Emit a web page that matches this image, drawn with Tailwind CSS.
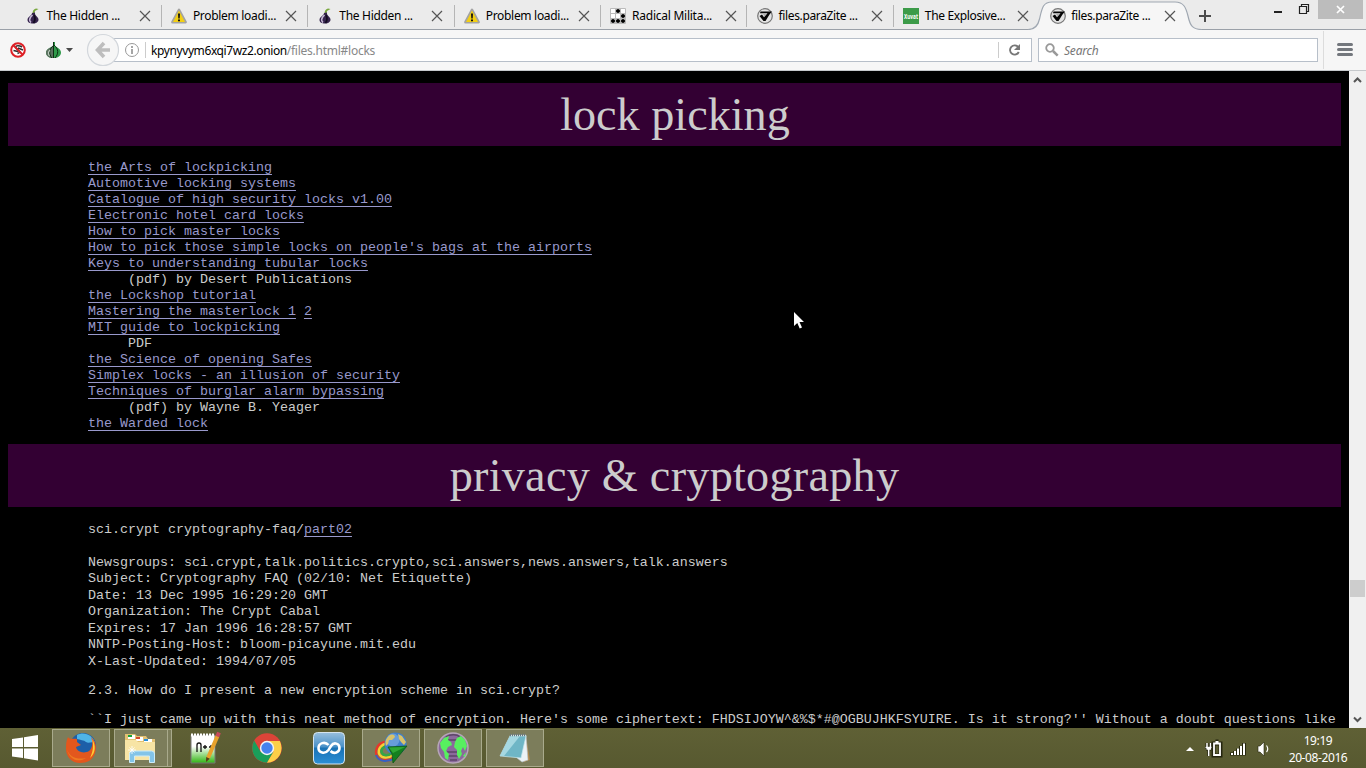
<!DOCTYPE html>
<html lang="en">
<head>
<meta charset="utf-8">
<title>files.paraZite</title>
<script src="https://cdn.jsdelivr.net/npm/@tailwindcss/browser@4"></script>
</head>
<body class="w-[1366px] h-[768px] overflow-hidden bg-black flex flex-col font-['Noto_Sans',sans-serif] text-[12px] text-black">
<svg class="hidden">
  <symbol id="close" viewBox="0 0 12 12"><path d="M1 1L11 11M11 1L1 11" stroke="#555" stroke-width="1.2" fill="none"/></symbol>
  <symbol id="onion" viewBox="0 0 16 16"><path d="M7.500 6C7.500 3 8.500 1 11 .5L13.500 1L10 3L9.500 6Z" fill="#79a83e"/><path d="M7 5C7 8 2.500 8.500 2.500 12C2.500 14.500 5 15.500 8 15.500S13.500 14 13.500 11.500C13.500 8.500 9.500 8 10 4.500Z" fill="#35234c"/><path d="M7.500 7C4 10 4 13 6 14.500" stroke="#c6bad6" stroke-width="1.600" fill="none"/><path d="M9 7C10.500 10 10 13 8.500 15" stroke="#120b20" stroke-width="1.800" fill="none"/></symbol>
  <symbol id="warn" viewBox="0 0 16 16"><path d="M8 1.800L14.600 14.200H1.400Z" fill="#e8c51b" stroke="#a3a3a3" stroke-width="2.500" stroke-linejoin="round"/><path d="M8 2.500L14 14H2Z" fill="#f3cf14"/><path d="M7 5.500H9L8.700 10.500H7.300ZM7 11.500H9V13.300H7Z" fill="#111"/></symbol>
  <symbol id="glider" viewBox="0 0 16 16"><path d="M.5 .5H15.500V15.500H.5ZM5.500 .5V15.500M10.500 .5V15.500M.5 5.500H15.500M.5 10.500H15.500" fill="#fff" stroke="#bbb"/><g fill="#000"><circle cx="8" cy="3" r="2.100"/><circle cx="13" cy="8" r="2.100"/><circle cx="3" cy="13" r="2.100"/><circle cx="8" cy="13" r="2.100"/><circle cx="13" cy="13" r="2.100"/></g></symbol>
  <symbol id="check" viewBox="0 0 16 16"><circle cx="8" cy="8" r="7.300" fill="#e4e4e4" stroke="#777" stroke-width="1.200"/><path d="M3.500 3.500H15L12.500 6.500L8.500 13H6.500L2.500 8L5 6.500L7 9.200L10.500 5.300H3Z" fill="#050505"/><path d="M6 5.800H9.500L7.200 8.300Z" fill="#aaa"/></symbol>
</svg>

<header class="h-[30px] shrink-0 bg-[#ebebeb] border-b border-[#9aa0a8] flex pl-[15.500px] relative">
  <div class="w-[146.400px] shrink-0 h-[29px] pl-[9px] flex items-center relative pt-[3px]"><svg class="size-4 shrink-0"><use href="#onion"/></svg><span class="ml-[6px] w-[87px] whitespace-nowrap tracking-[-0.300px]">The Hidden ...</span><svg class="size-3 ml-[5px] shrink-0"><use href="#close"/></svg><i class="absolute right-0 top-[5px] w-px h-[22px] bg-[#b5b5b5]"></i></div>
  <div class="w-[146.400px] shrink-0 h-[29px] pl-[9px] flex items-center relative pt-[3px]"><svg class="size-4 shrink-0"><use href="#warn"/></svg><span class="ml-[6px] w-[87px] whitespace-nowrap tracking-[-0.300px]">Problem loadi...</span><svg class="size-3 ml-[5px] shrink-0"><use href="#close"/></svg><i class="absolute right-0 top-[5px] w-px h-[22px] bg-[#b5b5b5]"></i></div>
  <div class="w-[146.400px] shrink-0 h-[29px] pl-[9px] flex items-center relative pt-[3px]"><svg class="size-4 shrink-0"><use href="#onion"/></svg><span class="ml-[6px] w-[87px] whitespace-nowrap tracking-[-0.300px]">The Hidden ...</span><svg class="size-3 ml-[5px] shrink-0"><use href="#close"/></svg><i class="absolute right-0 top-[5px] w-px h-[22px] bg-[#b5b5b5]"></i></div>
  <div class="w-[146.400px] shrink-0 h-[29px] pl-[9px] flex items-center relative pt-[3px]"><svg class="size-4 shrink-0"><use href="#warn"/></svg><span class="ml-[6px] w-[87px] whitespace-nowrap tracking-[-0.300px]">Problem loadi...</span><svg class="size-3 ml-[5px] shrink-0"><use href="#close"/></svg><i class="absolute right-0 top-[5px] w-px h-[22px] bg-[#b5b5b5]"></i></div>
  <div class="w-[146.400px] shrink-0 h-[29px] pl-[9px] flex items-center relative pt-[3px]"><svg class="size-4 shrink-0"><use href="#glider"/></svg><span class="ml-[6px] w-[87px] whitespace-nowrap tracking-[-0.250px]">Radical Milita...</span><svg class="size-3 ml-[6px] shrink-0"><use href="#close"/></svg><i class="absolute right-0 top-[5px] w-px h-[22px] bg-[#b5b5b5]"></i></div>
  <div class="w-[146.400px] shrink-0 h-[29px] pl-[9px] flex items-center relative pt-[3px]"><svg class="size-4 ml-px shrink-0"><use href="#check"/></svg><span class="ml-[5px] w-[88px] whitespace-nowrap tracking-[-0.350px]">files.paraZite ...</span><svg class="size-3 ml-[5px] shrink-0"><use href="#close"/></svg><i class="absolute right-0 top-[5px] w-px h-[22px] bg-[#b5b5b5]"></i></div>
  <div class="w-[146.400px] shrink-0 h-[29px] pl-[9px] flex items-center relative pt-[3px]"><svg class="size-4 shrink-0" viewBox="0 0 16 16"><rect width="16" height="16" fill="#3c9b49"/><text x="1" y="10.500" textLength="14" lengthAdjust="spacingAndGlyphs" font-size="7" font-weight="700" fill="#fff">Xuvat</text></svg><span class="ml-[6px] w-[87px] whitespace-nowrap tracking-[-0.350px]">The Explosive...</span><svg class="size-3 ml-[5px] shrink-0"><use href="#close"/></svg></div>
  <div class="w-[146.400px] shrink-0 h-[29px] pl-[9px] flex items-center relative pt-[3px]">
    <svg class="absolute left-[-12px] top-0 w-[176px] h-[30px]" viewBox="0 0 176 30"><path d="M0 30V29.500C7 29.500 10 26 11.500 19C14 8 15 2 24 2H147C156 2 158 8 160 16C162 25 164 29.500 174 29.500V30Z" fill="#f6f6f6"/><path d="M0 29.500C7 29.500 10 26 11.500 19C14 8 15 2 24 2H147C156 2 158 8 160 16C162 25 164 29.500 174 29.500" fill="none" stroke="#a0a8b2" stroke-width="1.200"/></svg>
    <svg class="size-4 ml-px shrink-0 relative"><use href="#check"/></svg><span class="ml-[5px] w-[88px] whitespace-nowrap tracking-[-0.350px] relative">files.paraZite ...</span><svg class="size-3 ml-[5px] shrink-0 relative"><use href="#close"/></svg></div>
  <svg class="size-[12px] ml-[12px] mt-[10px]" viewBox="0 0 12 12"><path d="M6 0V12M0 6H12" stroke="#4c4c4c" stroke-width="2"/></svg>
  <svg class="w-[54px] h-[16px] ml-auto mr-[52px]" viewBox="0 0 54 16"><path d="M14 12H22" stroke="#222" stroke-width="2"/><path d="M39.500 6.500H46.500V13.500H39.500ZM41.500 6V4.500H48.500V11.500H47" fill="none" stroke="#222" stroke-width="1.200"/></svg>
  <div class="absolute right-[3px] top-0 w-[45px] h-[19px] bg-[#bcbcbc] flex items-center justify-center"><svg class="size-[9px]" viewBox="0 0 9 9"><path d="M1 1L8 8M8 1L1 8" stroke="#fff" stroke-width="1.700"/></svg></div>
</header>

<nav class="h-[41px] shrink-0 bg-[#f6f6f6] border-b border-[#c6c9cc] flex items-center relative">
  <svg class="w-[84px] h-[40px] shrink-0" viewBox="0 0 84 40">
    <circle cx="18" cy="20" r="6.800" fill="#fff" stroke="#dd2026" stroke-width="2"/><path d="M22 17C18 14.500 14 16 16.500 18.500S22 22 17.500 23.500M13.500 20.500L18 21.500M18 18L23 20" stroke="#2e2e2e" stroke-width="1.500" fill="none"/><path d="M13.300 15.300L22.700 24.700" stroke="#dd2026" stroke-width="2"/>
    <path d="M53 12H55V16C57 17.500 61 19 61 22.500C61 26 58 28 53.500 28S46 26 46 22.500C46 19 51 17.500 53 16Z" fill="#2f9a4a"/><path d="M53 16C51 17.500 46 19 46 22.500C46 26 49 28 53 28Z" fill="#5b705f"/><path d="M54 15C49 19 48.500 24 52 28M54 15C59 19 58.500 24 55 28M53.500 12V28" stroke="#0a3012" fill="none" stroke-width="1"/><path d="M50 20C48 22 48 24 49.500 26" stroke="#b9c9bb" stroke-width="1.200" fill="none"/>
    <path d="M66 18H73L69.500 22Z" fill="#4a4a4a"/>
  </svg>
  <div class="h-[24px] w-[918px] ml-[30px] bg-white border border-[#b7bfc9] flex items-center">
    <svg class="w-[32px] h-[22px] shrink-0" viewBox="0 0 32 22"><circle cx="17" cy="11" r="6.500" fill="none" stroke="#999"/><path d="M17 10V15M17 7V9" stroke="#888" stroke-width="1.500"/><path d="M30.500 3V19" stroke="#ccc"/></svg>
    <span class="ml-[4px] mt-[2px] whitespace-nowrap text-[#888] tracking-[-0.250px]"><span class="text-black tracking-[-0.400px]">kpynyvym6xqi7wz2.onion</span>/files.html#locks</span>
    <svg class="w-[33px] h-[22px] ml-auto shrink-0" viewBox="0 0 33 22"><path d="M.5 3V19" stroke="#ccc"/><path d="M20.300 8.200A4.600 4.600 0 1 0 20.800 13" fill="none" stroke="#777" stroke-width="1.900"/><path d="M22 5V11H16Z" fill="#777"/></svg>
  </div>
  <svg class="absolute left-[86px] top-[3px] size-[34px]" viewBox="0 0 34 34"><circle cx="17" cy="17" r="15.500" fill="#f6f6f6" stroke="#d3d7dc" stroke-width="1.200"/><path d="M18 10L11.500 17L18 24M12 17H24" stroke="#bdbdbd" stroke-width="3.600" fill="none"/></svg>
  <div class="h-[24px] w-[280px] ml-[6px] bg-white border border-[#b7bfc9] flex items-center pl-[6px] italic text-[#777] tracking-[-0.200px]">
    <svg class="size-[14px] mr-[5px]" viewBox="0 0 14 14"><circle cx="5" cy="5" r="3.800" stroke="#999" stroke-width="1.800" fill="none"/><path d="M8 8L12.700 12.700" stroke="#999" stroke-width="2.500"/></svg><span class="mt-[2px]">Search</span></div>
  <div class="ml-[5px] h-[38px] w-px bg-[#dcdcdc]"></div>
  <svg class="w-[16px] h-[13px] ml-[13px] mb-px" viewBox="0 0 16 13"><path d="M1.500 1.500H14.500M1.500 6.500H14.500M1.500 11.500H14.500" stroke="#73777d" stroke-width="3" stroke-linecap="round"/></svg>
</nav>

<main class="h-[657px] shrink-0 flex">
  <div class="w-[1349px] overflow-hidden pl-[8px] pr-[8px] pt-[12px] font-['Liberation_Mono',monospace] text-[13.333px] leading-[16px] text-[#ccc]">
    <h1 class="h-[63px] bg-[#330033] font-['Liberation_Serif',serif] text-[46.200px] leading-[63px] text-center pl-px">lock picking</h1>
    <div class="pl-[80px] pt-[14px] whitespace-pre [&_a]:text-[#9999cc] [&_a]:underline [&_a]:underline-offset-[3px] [&_a]:decoration-1 [&_a]:decoration-[#9999cc]"><a>the Arts of lockpicking</a>
<a>Automotive locking systems</a>
<a>Catalogue of high security locks v1.00</a>
<a>Electronic hotel card locks</a>
<a>How to pick master locks</a>
<a>How to pick those simple locks on people's bags at the airports</a>
<a>Keys to understanding tubular locks</a>
     (pdf) by Desert Publications
<a>the Lockshop tutorial</a>
<a>Mastering the masterlock 1</a> <a>2</a>
<a>MIT guide to lockpicking</a>
     PDF
<a>the Science of opening Safes</a>
<a>Simplex locks - an illusion of security</a>
<a>Techniques of burglar alarm bypassing</a>
     (pdf) by Wayne B. Yeager
<a>the Warded lock</a></div>
    <h1 class="h-[63px] mt-[12px] bg-[#330033] font-['Liberation_Serif',serif] text-[46.200px] leading-[63px] text-center tracking-[0.270px]">privacy &amp; cryptography</h1>
    <div class="pl-[80px] pt-[14.800px] whitespace-pre leading-[16.500px]">sci.crypt cryptography-faq/<a class="text-[#9999cc] underline underline-offset-[3px] decoration-1">part02</a>

Newsgroups: sci.crypt,talk.politics.crypto,sci.answers,news.answers,talk.answers
Subject: Cryptography FAQ (02/10: Net Etiquette)
Date: 13 Dec 1995 16:29:20 GMT
Organization: The Crypt Cabal
Expires: 17 Jan 1996 16:28:57 GMT
NNTP-Posting-Host: bloom-picayune.mit.edu
X-Last-Updated: 1994/07/05</div>
    <p class="pl-[80px] mt-[12.700px]">2.3. How do I present a new encryption scheme in sci.crypt?</p>
    <p class="pl-[80px] mt-[13px] whitespace-nowrap">``I just came up with this neat method of encryption. Here's some ciphertext: FHDSIJOYW^&amp;%$*#@OGBUJHKFSYUIRE. Is it strong?'' Without a doubt questions like</p>
  </div>
  <div class="w-[17px] bg-[#f0f0f0] flex flex-col items-center">
    <svg class="w-[17px] h-[17px]" viewBox="0 0 17 17"><path d="M5 11L8.500 7.500L12 11" stroke="#555" stroke-width="2" fill="none"/></svg>
    <div class="w-[15px] h-[17px] mt-[492px] bg-[#cdcdcd]"></div>
    <svg class="w-[17px] h-[17px] mt-auto" viewBox="0 0 17 17"><path d="M5 6.500L8.500 10L12 6.500" stroke="#555" stroke-width="2" fill="none"/></svg>
  </div>
</main>

<footer class="h-[40px] shrink-0 bg-linear-to-b from-[#5f6035] to-[#575930] flex items-start pt-px">
  <svg class="w-[28px] h-[28px] ml-[11px] mt-[5px] shrink-0" viewBox="0 0 28 28"><path d="M1 5L12 3.500V13H1ZM13 3.300L27 1V13H13ZM1 14.500H12V24L1 22.500ZM13 14.500H27V26.500L13 24.300Z" fill="#fff"/></svg>
  <div class="w-[58px] h-[38px] ml-[13px] bg-[#7c7d5b] border border-[#a9aa8c] flex items-center justify-center">
    <svg class="size-8" viewBox="0 0 32 32"><circle cx="18" cy="14" r="13" fill="#1d5fa8"/><path d="M12 3C19 -1 28 3 30 11C26 9 24 12 21 10C19 8 15 8 12 7Z" fill="#4fb4e6"/><path d="M3 5C5 8 8 6 12 7L12 10L16 13L11 15C12 20 19 22 24 19C28 16 28 9 26 5C31 9 32 16 30 21C28 28 22 31 15 31C7 31 1 25 1 17C1 13 1 9 3 5Z" fill="#e3571d"/><path d="M27 7C31 13 31 21 25 26C28 20 29 13 27 7Z" fill="#ffcd35"/><path d="M2 17C4 25 12 28 21 26C14 31 4 28 2 17Z" fill="#ee7a20"/></svg></div>
  <div class="w-[54px] h-[38px] ml-[4px] bg-[#7c7d5b] border border-[#a9aa8c] flex items-center justify-center">
    <svg class="size-8 -ml-[2px]" viewBox="0 0 32 32"><path d="M1 5V2H11L13 4H22L24 7H31V28H1Z" fill="#e3c173"/><path d="M4 3H11V7H4ZM12 5H19V9H12ZM20 7H28V11H20Z" fill="#fff"/><path d="M4 3H8V5H4Z" fill="#16a43a"/><path d="M12 5H16V7H12Z" fill="#d5482b"/><path d="M20 7H24V9H20Z" fill="#278ed8"/><path d="M1 8H12L14 10H31V28H1Z" fill="#f7e4a5"/><path d="M5.500 30.500V22Q5.500 19 8.500 19H27.500Q30.500 19 30.500 22V30.500H25.500V24H10.500V30.500Z" fill="#83c4e8" stroke="#ccecf9"/><path d="M8 14V22M4 18H12M5.500 15.500L10.500 20.500M10.500 15.500L5.500 20.500" stroke="#fff" stroke-width=".8"/></svg></div>
  <div class="w-[4px] h-[38px] bg-[#7c7d5b] border border-l-0 border-[#a9aa8c]"></div>
  <svg class="w-[32px] h-[34px] ml-[17px] mt-[2px] shrink-0" viewBox="0 0 32 34"><defs><linearGradient id="npp" x2="0" y2="1"><stop offset=".4" stop-color="#fff"/><stop offset="1" stop-color="#31b512"/></linearGradient></defs><path d="M2 4H26V32H2Z" fill="url(#npp)" stroke="#777"/><path d="M2 4H26" stroke="#fff" stroke-width="3" stroke-dasharray="2 1"/><path d="M8 21V14Q8 12 10 12T12 14V21M14 16H18M16 14V18M20 16H24M22 14V18" stroke="#111" stroke-width="1.300" fill="none"/><path d="M28.500 5L19 27" stroke="#e8a22c" stroke-width="4"/><path d="M30 1.500L28.300 5.500" stroke="#c9495b" stroke-width="4"/><path d="M17.200 26L20.800 27.800L17 31Z" fill="#5a3d15"/></svg>
  <svg class="w-[32px] h-[32px] ml-[30px] mt-[3px] shrink-0" viewBox="0 0 32 32"><circle cx="16" cy="16" r="14.800" fill="#dc4438"/><path d="M3.200 8.600A14.800 14.800 0 0 0 16 30.800L22.500 19.700L9.600 19.700Z" fill="#199e5a"/><path d="M16 30.800A14.800 14.800 0 0 0 28.800 9H16L22.500 19.700Z" fill="#fccf48"/><circle cx="16" cy="16" r="7.200" fill="#f4f4f4"/><circle cx="16" cy="16" r="5.700" fill="#4682ee"/></svg>
  <svg class="w-[32px] h-[33px] ml-[30px] mt-[3px] shrink-0" viewBox="0 0 32 33"><defs><linearGradient id="blue" x2="0" y2="1"><stop stop-color="#98bfde"/><stop offset=".45" stop-color="#4a91c8"/><stop offset=".5" stop-color="#1972b5"/><stop offset="1" stop-color="#2b8fd5"/></linearGradient></defs><rect x=".5" y=".5" width="31" height="31.500" rx="4" fill="url(#blue)" stroke="#d5e4ee"/><path d="M15.500 13C12 9 5.500 11 5.500 16S12 22.500 15.500 18L18 14C21 9.500 26.500 11.500 26.500 16S21 22.500 17.500 19" stroke="#fff" stroke-width="2.600" fill="none"/></svg>
  <div class="w-[58px] h-[38px] ml-[17px] bg-[#7c7d5b] border border-[#a9aa8c] flex items-center justify-center">
    <svg class="w-[34px] h-[32px]" viewBox="0 0 34 32"><g fill="none" stroke-width="2.500"><path d="M14 10C5 9 0 17 3 24C6 30 16 29 20 25" stroke="#e6382b"/><path d="M15 12C8 11 3 17 5.500 22.500C8 27 15 26 19 23" stroke="#f7d034"/><path d="M15 14.500C10 13.500 6 17 8 21C10 24 14 24 18 21" stroke="#35a746"/><path d="M2 23C5 31 15 30 21 26" stroke="#3463c5" stroke-width="2"/></g><circle cx="21.500" cy="11.500" r="11" fill="#3f7fcc"/><circle cx="19" cy="8" r="6.500" fill="#8fbbe8" fill-opacity=".5"/><path d="M13 6C16 1 21 2 21 5L18 8L15 8L14 12L12 14C11 11 11 8 13 6ZM24 2L28 4L32 10L30 13L27 10L25 7Z" fill="#d9c26a"/><path d="M14 15L33 14L19 31L18 22Z" fill="#14801f" stroke="#0c5818" stroke-width=".8"/><path d="M15 15.500L31 15L19 21Z" fill="#2ea834"/></svg></div>
  <div class="w-[58px] h-[38px] ml-[4px] bg-[#7c7d5b] border border-[#a9aa8c] flex items-center justify-center">
    <svg class="size-8" viewBox="0 0 32 32"><circle cx="16" cy="16" r="15" fill="#8b6a9c" stroke="#b6a5b8" stroke-width="1.500"/><path d="M9 5C13 2 20 2 23 5M11 8H22M10 20H21M10 24H22M13 28H20" stroke="#5d4668" fill="none" stroke-width="1.500"/><path d="M3 11L7 6L12 4L11 8L14 10L15 13L11 15L9 19L12 22L11 28L8 26L7 20L4 16ZM18 10L20 6L24 4L28 8L30 14L28 19L26 15L24 19L25 22L22 27L20 23V18L17 15ZM26 24L29 20L28 25Z" fill="#57f05f"/></svg></div>
  <div class="w-[58px] h-[38px] ml-[4px] bg-[#7c7d5b] border border-[#a9aa8c] flex items-center justify-center">
    <svg class="size-8" viewBox="0 0 32 32"><path d="M27 5L31 28L25 30L22 24Z" fill="#b58747"/><path d="M11 3H27L29 28L23 30L18 26Z" fill="#edf2f5" stroke="#aebdc5" stroke-width=".6"/><path d="M11 4H27L22 26L1 24Z" fill="#6fb6c6" stroke="#c8e8ee" stroke-width=".7"/><path d="M11 4H21L5 24H1Z" fill="#a6d8e1"/><path d="M11 3H27" stroke="#68777d" stroke-width="2.500" stroke-dasharray="1 1"/></svg></div>
  <div class="ml-auto flex items-start text-white">
    <svg class="w-[94px] h-[38px]" viewBox="0 0 94 38"><path d="M10 22L14 18L18 22Z" fill="#fff"/><g fill="none" transform="translate(1 0)"><path d="M30 14V18M33.500 14V18M28 18.500H35.500M29 20H34.500M31.700 20V27" stroke="#24250f" stroke-width="3"/><path d="M30 14V18M33.500 14V18M28.500 18.500H35M29.500 20H34M31.700 20V27" stroke="#fff" stroke-width="1.500"/><path d="M36.500 14.500H43.500V26.500H36.500ZM38.500 12.500H41.500" stroke="#24250f" stroke-width="4"/><path d="M37 14.500H43V26H37ZM38.500 13H41.500" stroke="#fff" stroke-width="1.800"/></g><g transform="translate(1 0)"><path d="M55 26.500V23.500M58 26.500V22M61 26.500V19.500M64 26.500V17M67 26.500V14" stroke="#25260f" stroke-width="4"/><path d="M55 26V24M58 26V22M61 26V19.500M64 26V17M67 26V14.500" stroke="#fff" stroke-width="2"/><path d="M81 17H83L87 13V27L83 23H81Z" fill="#fff" stroke="#25260f" stroke-width=".6"/><path d="M89.500 16.500Q92 20 89.500 23" stroke="#fff" fill="none" stroke-width="1.200"/></g></svg>
    <div class="w-[96px] text-center leading-[17px] tracking-[-0.400px] pt-[3px]">19:19<br>20-08-2016</div>
  </div>
</footer>
<svg class="absolute left-[793px] top-[311px] w-[13px] h-[19px]" viewBox="0 0 13 19"><path d="M1 1V15L4.300 12L6.700 17.500L9 16.500L6.500 11H11Z" fill="#fff"/></svg>
</body>
</html>
